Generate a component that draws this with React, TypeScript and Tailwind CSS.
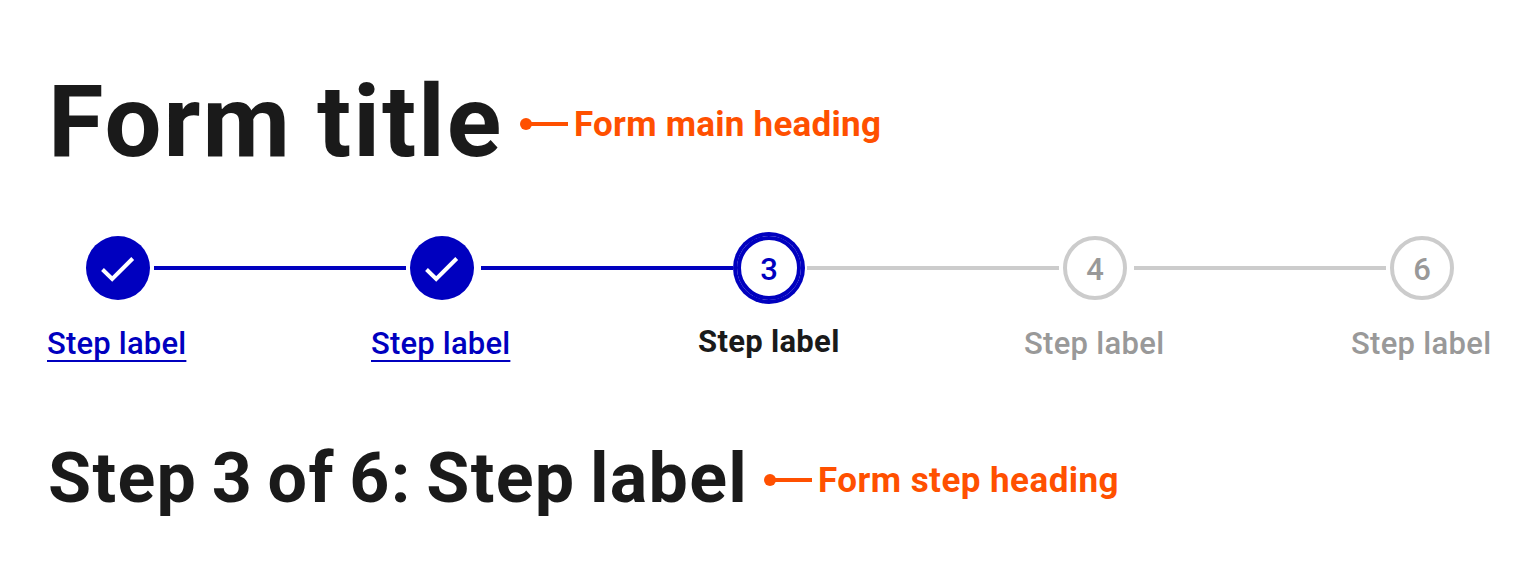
type StepState = "done" | "current" | "upcoming";

type Step = {
  number: number;
  state: StepState;
  width: string;
  line?: string;
};

const steps: Step[] = [
  { number: 1, state: "done", width: "w-[324px]", line: "ml-1 bg-[#0000bf]" },
  { number: 2, state: "done", width: "w-[327px]", line: "ml-[7px] bg-[#0000bf]" },
  { number: 3, state: "current", width: "w-[326px]", line: "ml-[6px] bg-[#cccccc]" },
  { number: 4, state: "upcoming", width: "w-[327px]", line: "ml-[7px] bg-[#cccccc]" },
  { number: 6, state: "upcoming", width: "w-[150px]" },
];

const circleStyles: Record<StepState, string> = {
  done: "bg-[#0000bf] text-white",
  current: "border-4 border-[#0000bf] text-[#0000bf] ring-4 ring-[#0000bf]",
  upcoming: "border-4 border-[#cccccc] text-[#999999]",
};

const labelStyles: Record<StepState, string> = {
  done: "mt-[26px] tracking-[0.2px] font-medium text-[#0000bf] underline decoration-2 underline-offset-[6px]",
  current: "mt-[24px] tracking-[0.3px] font-bold text-[#1a1a1a]",
  upcoming: "mt-[26px] tracking-[0.3px] font-medium text-[#999999]",
};

function Callout({ text, className }: { text: string; className: string }) {
  return (
    <div className={`flex items-center text-[#ff5000] ${className}`}>
      <svg width="48" height="12" viewBox="0 0 48 12" fill="currentColor" className="shrink-0">
        <circle cx="6" cy="6" r="6" />
        <rect x="6" y="4" width="42" height="4" />
      </svg>
      <span className="mt-0.5 ml-[6px] whitespace-nowrap text-[35px] leading-10 font-bold">{text}</span>
    </div>
  );
}

function StepItem({ step }: { step: Step }) {
  return (
    <li className={`shrink-0 ${step.width}`}>
      <div className="flex items-center pl-[39px]">
        <div
          className={`flex size-16 shrink-0 items-center justify-center rounded-full text-[31px] leading-none font-medium ${circleStyles[step.state]}`}
        >
          {step.state === "done" ? (
            <svg width="64" height="64" viewBox="0 0 64 64" fill="none" stroke="currentColor" strokeWidth="4">
              <path d="M16.5 33.5L26.2 43L46.7 22.5" />
            </svg>
          ) : (
            <span className="mt-0.5">{step.number}</span>
          )}
        </div>
        {step.line && <div className={`h-1 w-[252px] shrink-0 ${step.line}`} />}
      </div>
      <div className={`whitespace-nowrap text-[31px] leading-9 ${labelStyles[step.state]}`}>Step label</div>
    </li>
  );
}

export default function App() {
  return (
    <main className="h-[562px] w-[1536px] overflow-hidden bg-white pt-[60px] font-['Roboto','Liberation_Sans',sans-serif]">
      <header className="flex h-[120px] items-center pl-[48px]">
        <h1 className="mt-[3px] w-[472px] shrink-0 whitespace-nowrap text-[101px] leading-[120px] font-bold tracking-[2px] [word-spacing:-2px] text-[#1a1a1a]">
          Form title
        </h1>
        <Callout text="Form main heading" className="mt-2 tracking-[0.25px]" />
      </header>
      <ol className="mt-14 flex pl-[47px]">
        {steps.map((step) => (
          <StepItem key={step.number} step={step} />
        ))}
      </ol>
      <section className="mt-[76px] flex h-[80px] items-center pl-[48px]">
        <h2 className="w-[716px] shrink-0 whitespace-nowrap text-[70px] leading-[80px] font-bold tracking-[1.3px] [word-spacing:-4.2px] text-[#1a1a1a]">
          Step 3 of 6: Step label
        </h2>
        <Callout text="Form step heading" className="mt-1 tracking-[0.45px]" />
      </section>
    </main>
  );
}
